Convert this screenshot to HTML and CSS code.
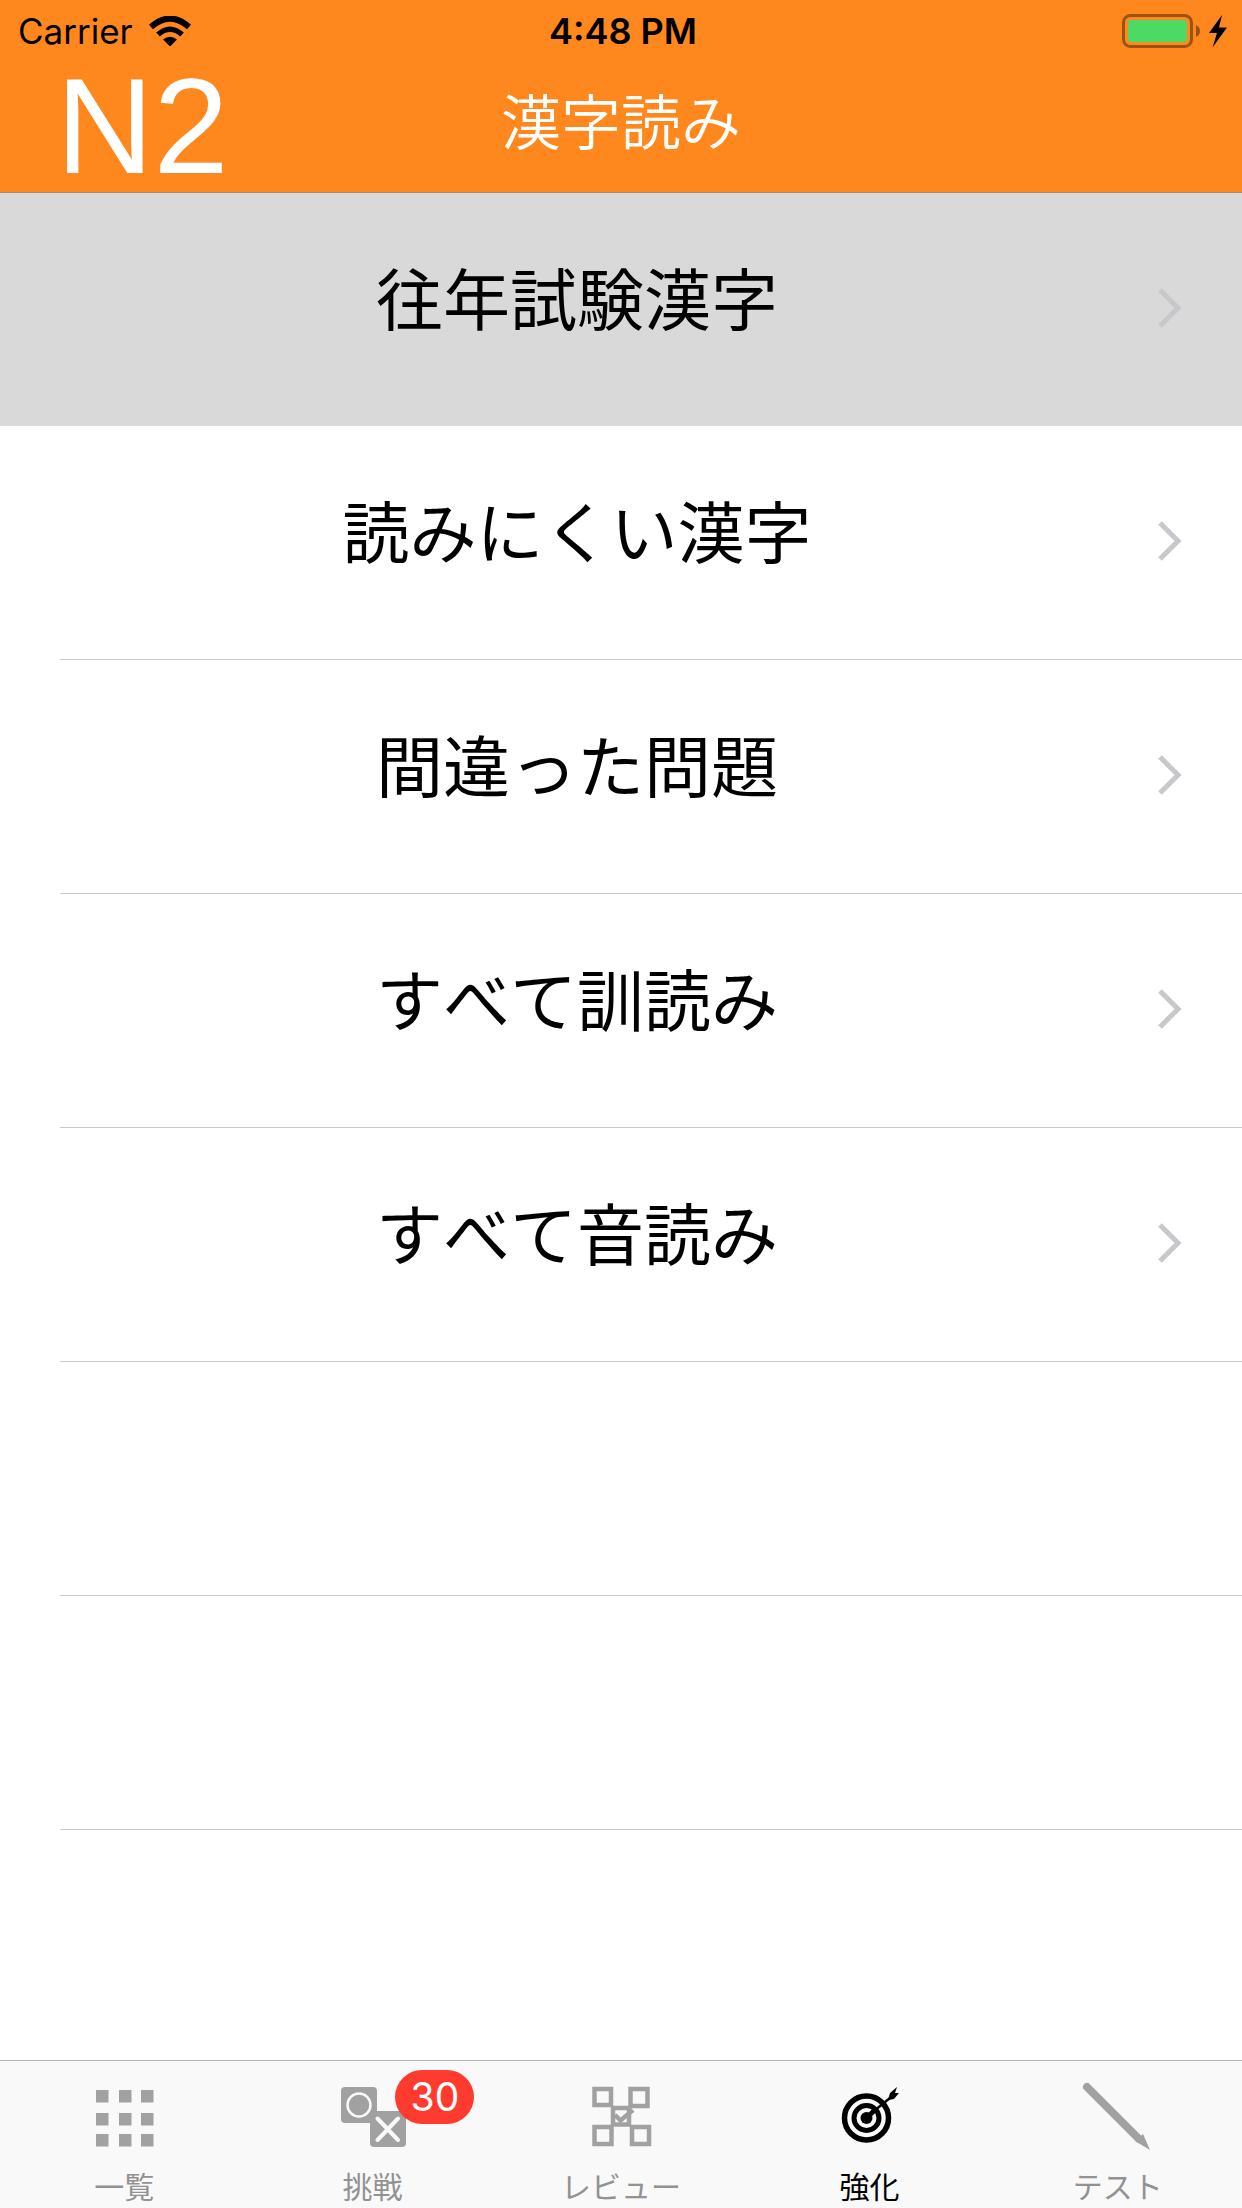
FILE: index.html
```html
<!DOCTYPE html>
<html lang="ja">
<head>
    <meta charset="UTF-8">
    <meta name="viewport" content="width=device-width, initial-scale=1.0">
    <title>漢字読み</title>
    <link rel="stylesheet" href="styles.css">
</head>
<body>
    <header>
        <div class="status-bar">
            <div class="status-left">
                <span>Carrier</span>
                <svg class="wifi" viewBox="0 0 42 30" aria-hidden="true">
                    <path d="M2 11Q21 -6 40 11" fill="none" stroke="#000" stroke-width="6"/>
                    <path d="M9 18.500Q21 8 33 18.500" fill="none" stroke="#000" stroke-width="5.500"/>
                    <path d="M14 23.500Q21 18 28 23.500L21 30.500Z"/>
                </svg>
            </div>
            <span class="time">4:48 PM</span>
            <div class="status-right">
                <svg class="battery" viewBox="0 0 106 34" aria-hidden="true">
                    <rect x="1.500" y="1.500" width="68" height="31" rx="7" fill="none" stroke="#9c5312" stroke-width="3"/>
                    <rect x="6" y="6" width="59" height="22" rx="3" fill="#4cd964"/>
                    <path d="M74 11Q78 13 78 17T74 23Z" fill="#9c5312"/>
                    <path d="M100 1L87 19H95L90.500 33.500L105 13.500H97Z"/>
                </svg>
            </div>
        </div>
        <div class="nav-bar">
            <span class="level">N2</span>
            <h1>漢字読み</h1>
        </div>
    </header>

    <main>
        <ul class="menu">
            <li class="selected">
                <a href="#past">
                    <span>往年試験漢字</span>
                    <svg class="chevron" viewBox="0 0 24 40" aria-hidden="true"><path d="M2 2L20 20L2 38"/></svg>
                </a>
            </li>
            <li>
                <a href="#hard">
                    <span>読みにくい漢字</span>
                    <svg class="chevron" viewBox="0 0 24 40" aria-hidden="true"><path d="M2 2L20 20L2 38"/></svg>
                </a>
            </li>
            <li>
                <a href="#mistakes">
                    <span>間違った問題</span>
                    <svg class="chevron" viewBox="0 0 24 40" aria-hidden="true"><path d="M2 2L20 20L2 38"/></svg>
                </a>
            </li>
            <li>
                <a href="#kun">
                    <span>すべて訓読み</span>
                    <svg class="chevron" viewBox="0 0 24 40" aria-hidden="true"><path d="M2 2L20 20L2 38"/></svg>
                </a>
            </li>
            <li>
                <a href="#on">
                    <span>すべて音読み</span>
                    <svg class="chevron" viewBox="0 0 24 40" aria-hidden="true"><path d="M2 2L20 20L2 38"/></svg>
                </a>
            </li>
            <li></li>
            <li></li>
        </ul>
    </main>

    <nav class="tab-bar">
        <a href="#list">
            <svg viewBox="0 0 72 72" aria-hidden="true">
                <path fill="currentColor" d="M8 9h12.500v12.500H8zM31 9h12.500v12.500H31zM53 9h12.500v12.500H53zM8 32h12.500v12.500H8zM31 32h12.500v12.500H31zM53 32h12.500v12.500H53zM8 53h12.500v12.500H8zM31 53h12.500v12.500H31zM53 53h12.500v12.500H53z"/>
            </svg>
            <span>一覧</span>
        </a>
        <a href="#challenge">
            <svg viewBox="0 0 72 72" aria-hidden="true">
                <rect x="4" y="6" width="36" height="36" rx="4" fill="currentColor"/>
                <rect x="33" y="30" width="36" height="36" rx="4" fill="currentColor"/>
                <circle cx="22" cy="24" r="11.500" fill="none" stroke="#f9f9f9" stroke-width="2.500"/>
                <path d="M40.500 37.500L61 59M61 37.500L40.500 59" stroke="#f9f9f9" stroke-width="4" stroke-linecap="round"/>
            </svg>
            <span>挑戦</span>
            <span class="badge">30</span>
        </a>
        <a href="#review">
            <svg viewBox="0 0 72 72" aria-hidden="true">
                <g fill="none" stroke="currentColor" stroke-width="4.500">
                    <rect x="9.500" y="8" width="16.500" height="16"/>
                    <rect x="45.500" y="8" width="17" height="17"/>
                    <rect x="28" y="27" width="16" height="16.500"/>
                    <rect x="9.500" y="46" width="17" height="17"/>
                    <rect x="47" y="46" width="17" height="17"/>
                    <path d="M30 34L35.500 39.500L48 29"/>
                </g>
            </svg>
            <span>レビュー</span>
        </a>
        <a href="#training" class="active">
            <svg viewBox="0 0 72 72" aria-hidden="true">
                <circle cx="33.500" cy="37" r="22" fill="none" stroke="currentColor" stroke-width="5.500"/>
                <circle cx="33.500" cy="37" r="12.500" fill="none" stroke="currentColor" stroke-width="5"/>
                <circle cx="33.500" cy="37" r="6" fill="currentColor"/>
                <path d="M34 36.500L43 28" stroke="currentColor" stroke-width="5"/>
                <path d="M41 30L57 17" stroke="currentColor" stroke-width="2.500"/>
                <path fill="currentColor" d="M55 19L57 12L64 6L62 12L66 12L61 18Z"/>
            </svg>
            <span>強化</span>
        </a>
        <a href="#test">
            <svg viewBox="0 0 72 72" aria-hidden="true">
                <path d="M5 6L57 58" stroke="currentColor" stroke-width="8" stroke-linecap="round"/>
                <path d="M53 60L61 53L68 69Z" fill="currentColor"/>
            </svg>
            <span>テスト</span>
        </a>
    </nav>
</body>
</html>
```

FILE: styles.css
```css
* {
    box-sizing: border-box;
}
body {
    margin: 0;
    height: 100vh;
    display: flex;
    flex-direction: column;
    background-color: #fff;
    color: #000;
    font-family: Inter, "Noto Sans CJK JP", sans-serif;
}
a {
    color: inherit;
    text-decoration: none;
}
header {
    flex: none;
    background-color: #ff881e;
    border-bottom: 1px solid #a08a78;
}
.status-bar,
.nav-bar {
    display: grid;
    grid-template-columns: 1fr auto 1fr;
}
.status-bar {
    align-items: center;
    height: 60px;
    padding: 1px 14px 0 18px;
    font-size: 35px;
}
.status-left {
    display: flex;
    align-items: center;
    gap: 16px;
}
.wifi {
    width: 42px;
    height: 30px;
}
.time {
    font-size: 36px;
    font-weight: 600;
}
.status-right {
    display: flex;
    justify-content: flex-end;
}
.battery {
    width: 106px;
    height: 34px;
}
.nav-bar {
    height: 132px;
    padding: 0 56px;
}
.level {
    color: #fff;
    font-family: "Liberation Sans", Arial, sans-serif;
    font-size: 135px;
    line-height: 134px;
}
h1 {
    margin: 0;
    color: #fff;
    font-family: "Noto Sans CJK JP", sans-serif;
    font-size: 60px;
    font-weight: 350;
    line-height: 118px;
    grid-column: 2;
}
main {
    flex: 1;
    overflow: hidden;
}
.menu {
    list-style: none;
    margin: 0;
    padding: 0;
}
.menu li {
    display: flex;
    flex-direction: column;
    justify-content: flex-end;
    height: 234px;
    padding-left: 60px;
}
.menu li::after {
    content: "";
    height: 1px;
    background-color: #c8c7cc;
}
.menu .selected {
    height: 233px;
    background-color: #d9d9d9;
}
.menu .selected::after {
    display: none;
}
.menu a {
    flex: 1;
    display: flex;
    align-items: center;
    gap: 64px;
    padding: 0 60px 3px 0;
    font-size: 67px;
    font-kerning: none;
}
.menu a span {
    flex: 1;
    padding-bottom: 26px;
    text-align: center;
}
.chevron {
    width: 24px;
    height: 40px;
}
.chevron path {
    fill: none;
    stroke: #c7c7cc;
    stroke-width: 5;
}
.tab-bar {
    display: flex;
    height: 148px;
    flex: none;
    background-color: #f9f9f9;
    border-top: 1px solid #b2b2b2;
}
.tab-bar a {
    position: relative;
    flex: 1;
    display: flex;
    flex-direction: column;
    align-items: center;
    gap: 13px;
    padding-top: 20px;
    color: #929292;
    font-size: 30px;
    line-height: 42px;
}
.tab-bar svg {
    flex: none;
    width: 72px;
    height: 72px;
    color: #a1a1a1;
}
.tab-bar .active,
.tab-bar .active svg {
    color: #000;
}
.badge {
    position: absolute;
    top: 9px;
    left: 147px;
    width: 79px;
    height: 54px;
    border-radius: 27px;
    background-color: #ff3b30;
    color: #fff;
    font-size: 39px;
    line-height: 54px;
    text-align: center;
}
```
